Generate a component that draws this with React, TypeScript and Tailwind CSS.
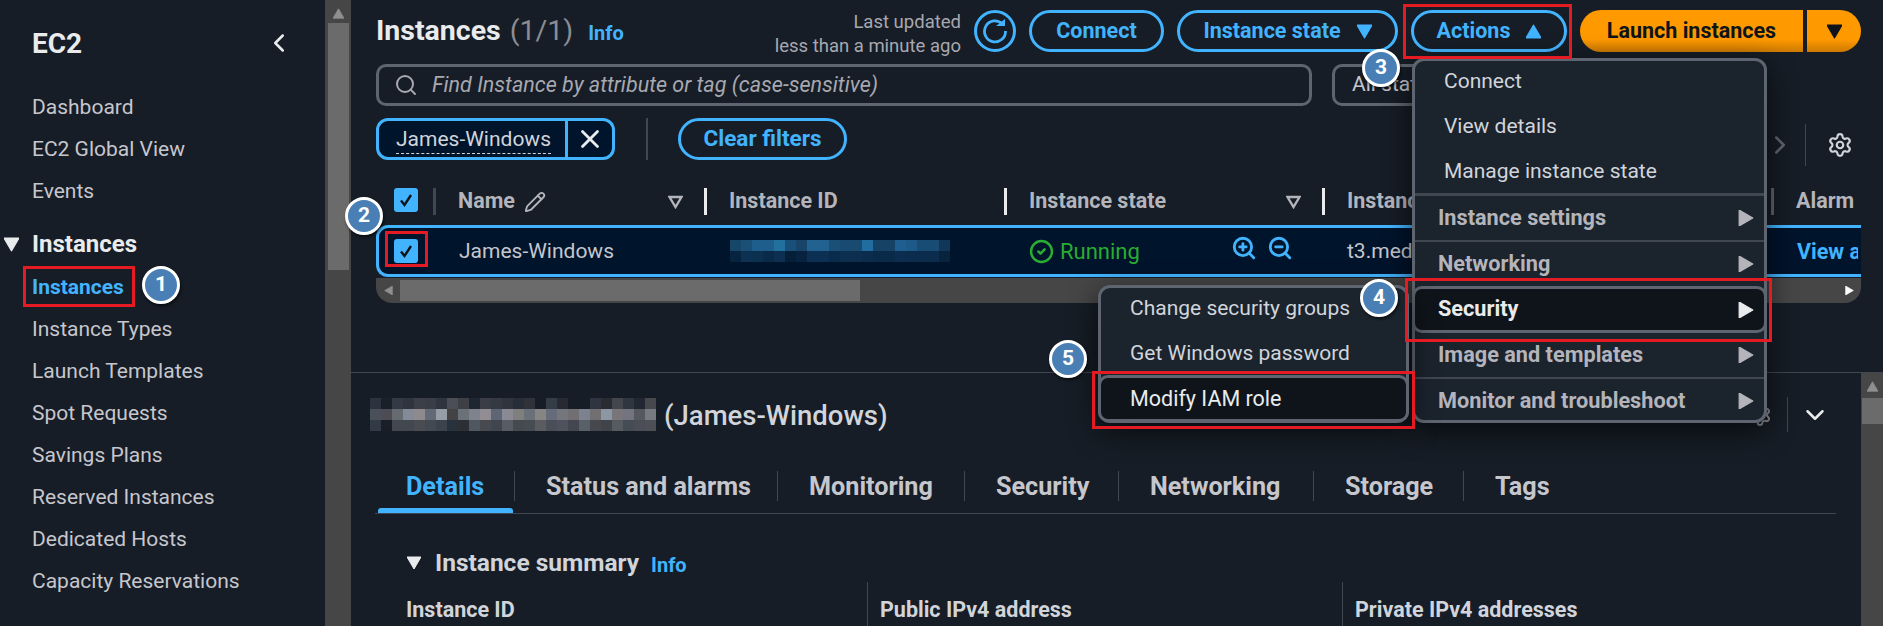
import { ChevronDown, ChevronLeft, ChevronRight, CircleCheck, Pencil, Search, Settings, X, ZoomIn, ZoomOut } from "lucide-react";

const FONT = "[font-family:Roboto,'Noto_Sans',sans-serif]";

const navTop = ["Dashboard", "EC2 Global View", "Events"];
const navBottom = ["Instance Types", "Launch Templates", "Spot Requests", "Savings Plans", "Reserved Instances", "Dedicated Hosts", "Capacity Reservations"];
const tabs = ["Details", "Status and alarms", "Monitoring", "Security", "Networking", "Storage", "Tags"];

const idMosaic = [
  ["#164668", "#1a4f76", "#1e5e8d", "#1f5e8b", "#22709e", "#19507a", "#174468", "#216291", "#216291", "#1a4f76", "#194b72", "#194a70", "#226da0", "#164266", "#164266", "#1f5e90", "#1e5a88", "#194c74", "#194c74", "#103658"],
  ["#06243f", "#0c3153", "#0c3050", "#0a2a49", "#0c2f52", "#051f38", "#07233f", "#0c3053", "#0c3053", "#0a2c4c", "#0c2f50", "#0c2f50", "#0b2c4c", "#0a2a4a", "#0a2a4a", "#0c2d4f", "#0b2c4c", "#0b2c4c", "#0b2c4c", "#07233e"],
];
const titleMosaic = [
  ["#2b343e", "#1a2029", "#333a45", "#2e353f", "#3c3f47", "#383d46", "#2e353f", "#4b4e57", "#3f4046", "#1e2731", "#3a3d46", "#343a44", "#30343c", "#272e38", "#2f3239", "#161d26", "#343c46", "#272a30", "#161d26", "#161d26", "#2f3540", "#2a2c32", "#44464e", "#303640", "#212833", "#46484e"],
  ["#4a505a", "#4d4c54", "#666b72", "#838b98", "#8e8a8e", "#626a78", "#979da6", "#434244", "#6b7178", "#7e838e", "#928d92", "#5e6676", "#8a8a94", "#7f7f7e", "#697078", "#858684", "#676c7a", "#74767d", "#726f73", "#7c8290", "#726f70", "#8b97a2", "#78767a", "#73747f", "#55585e", "#787a82"],
  ["#323a45", "#1a1e28", "#434750", "#434850", "#4a4c52", "#434952", "#3b434c", "#28323c", "#2c3034", "#515760", "#474b50", "#3f4650", "#585c64", "#454a50", "#474b52", "#5a5c60", "#4a4e58", "#4f525c", "#454750", "#586068", "#46484e", "#404349", "#585a62", "#454c56", "#4b4e56", "#4e5056"],
];

function Mosaic({ rows, cell }: { rows: string[][]; cell: number }) {
  return (
    <svg width={rows[0].length * cell} height={rows.length * cell} className="block shrink-0" shapeRendering="crispEdges">
      {rows.map((row, y) =>
        row.map((fill, x) => <rect key={`${x}-${y}`} x={x * cell} y={y * cell} width={cell} height={cell} fill={fill} />)
      )}
    </svg>
  );
}

function Tri({ dir, size = 14, color }: { dir: "down" | "up" | "right" | "left"; size?: number; color: string }) {
  const pts = { down: "0,1 14,1 7,13", up: "7,1 14,13 0,13", right: "1,0 13,7 1,14", left: "13,0 1,7 13,14" }[dir];
  return (
    <svg width={size} height={size} viewBox="0 0 14 14" className="shrink-0">
      <polygon points={pts} fill={color} stroke={color} strokeWidth="1" strokeLinejoin="round" />
    </svg>
  );
}

function SortTri() {
  return (
    <svg width="15" height="14" viewBox="0 0 15 14" className="shrink-0">
      <polygon points="1.5,2 13.5,2 7.5,12" fill="none" stroke="#b4b4bb" strokeWidth="2.4" />
    </svg>
  );
}

function Check() {
  return (
    <div className="flex h-[24px] w-[24px] shrink-0 items-center justify-center rounded-[3px] bg-[#42b4ff]">
      <svg width="16" height="16" viewBox="0 0 16 16">
        <path d="M3 8.5 L6.5 13 L13 3" fill="none" stroke="#0f141a" strokeWidth="2.4" />
      </svg>
    </div>
  );
}

function OutlineBtn({ children, className = "" }: { children: React.ReactNode; className?: string }) {
  return (
    <div className={`flex h-[42px] items-center justify-center rounded-[21px] border-[3px] border-[#42b4ff] text-[21.5px] font-bold text-[#42b4ff] ${className}`}>
      {children}
    </div>
  );
}

function HeadCell({ label, line, tri, pencil }: { label?: string; line: string; tri?: boolean; pencil?: boolean }) {
  return (
    <div className="flex h-[27px] items-center">
      <div className={`h-[27px] ${line} shrink-0`} />
      <span className="ml-[22px] whitespace-nowrap text-[21.5px] font-bold text-[#b4b4bb]">{label}</span>
      {pencil && <Pencil size={22} strokeWidth={2} className="ml-[9px] text-[#b4b4bb]" />}
      {tri && <div className="ml-auto mr-[21px]"><SortTri /></div>}
    </div>
  );
}

function Badge({ n, className }: { n: number; className: string }) {
  return (
    <div className={`absolute flex h-[38px] w-[38px] items-center justify-center rounded-full border-[3px] border-white bg-[#4a7fb5] text-[21px] font-bold text-white shadow-[1px_2px_3px_rgba(0,0,0,0.6)] ${className}`}>
      {n}
    </div>
  );
}

function MenuRow({ label, bold }: { label: string; bold?: boolean }) {
  return bold ? (
    <div className="flex h-[44px] items-center justify-between pl-[23px] pr-[10px] text-[21.7px] font-bold text-[#b4b4bb]">
      {label}
      <Tri dir="right" size={16} color="#b4b4bb" />
    </div>
  ) : (
    <div className="flex h-[45px] items-center pl-[29px] pt-[2px] text-[21px] text-[#d1d5db]">{label}</div>
  );
}

export default function App() {
  return (
    <div className={`relative flex h-[626px] w-[1883px] overflow-hidden bg-[#161d26] ${FONT}`}>
      {/* sidebar */}
      <aside className="w-[325px] shrink-0">
        <div className="flex h-[86px] items-center justify-between pl-[32px] pr-[31px]">
          <span className="mt-[1px] text-[28px] font-bold text-[#e9ebed]">EC2</span>
          <ChevronLeft size={30} strokeWidth={2} className="text-[#e9ebed]" />
        </div>
        {navTop.map((t) => (
          <div key={t} className="flex h-[42px] items-center pl-[32px] pt-[2px] text-[21px] text-[#c6c6cd]">{t}</div>
        ))}
        <div className="mt-[11px] flex h-[42px] items-center text-[24px] font-bold text-[#e9ebed]">
          <div className="ml-[4px] mr-[13px]"><Tri dir="down" size={15} color="#e9ebed" /></div>
          Instances
        </div>
        <div className="flex h-[43px] items-center pl-[32px] pt-[2px] text-[21px] font-bold text-[#42b4ff]">Instances</div>
        {navBottom.map((t) => (
          <div key={t} className="flex h-[42px] items-center pl-[32px] pt-[2px] text-[21px] text-[#c6c6cd]">{t}</div>
        ))}
      </aside>

      {/* page scrollbar */}
      <div className="flex w-[26px] shrink-0 flex-col items-center bg-[#464646]">
        <div className="mt-[8px] h-[8px]"><Tri dir="up" size={11} color="#8f8f8f" /></div>
        <div className="mt-[7px] h-[247px] w-[21px] bg-[#6b6b6b]" />
      </div>

      <main className="flex min-w-0 flex-1 flex-col">
        {/* instances list */}
        <section className="h-[373px] shrink-0 border-b border-[#414750] pl-[25px] pr-[22px] pt-[10px]">
          <div className="flex h-[42px] items-center">
            <span className="text-[28.5px] font-bold text-[#e9ebed]">Instances</span>
            <span className="ml-[9px] text-[28.5px] text-[#8c8c94]">(1/1)</span>
            <span className="ml-[15px] mt-[3px] text-[20px] font-bold text-[#42b4ff]">Info</span>
            <div className="ml-auto mr-[13px] pt-[6px] text-right text-[18.5px] leading-[24px] text-[#a8a8b0]">
              <div>Last updated</div>
              <div>less than a minute ago</div>
            </div>
            <div className="mr-[13px] flex h-[42px] w-[42px] items-center justify-center rounded-full border-[3px] border-[#42b4ff]">
              <svg width="26" height="26" viewBox="0 0 26 26">
                <path d="M20.5 6 A10.5 10.5 0 1 0 23.5 13" fill="none" stroke="#42b4ff" strokeWidth="2.8" />
                <path d="M14 8 H23 V1 Z" fill="#42b4ff" />
              </svg>
            </div>
            <OutlineBtn className="mr-[13px] w-[135px] pt-[1px]">Connect</OutlineBtn>
            <OutlineBtn className="mr-[13px] w-[221px] gap-[16px] pt-[1px]">Instance state <Tri dir="down" size={15} color="#42b4ff" /></OutlineBtn>
            <OutlineBtn className="mr-[13px] w-[156px] gap-[16px] pt-[1px]">Actions <Tri dir="up" size={15} color="#42b4ff" /></OutlineBtn>
            <div className="flex h-[42px] w-[281px] overflow-hidden rounded-[21px] text-[21.5px] font-bold text-[#0f141a]">
              <div className="flex w-[223px] items-center justify-center bg-gradient-to-b from-[#ff9900] from-70% to-[#cc7a00] pt-[1px]">Launch instances</div>
              <div className="ml-[4px] flex flex-1 items-center justify-center bg-gradient-to-b from-[#ff9900] from-70% to-[#cc7a00]">
                <Tri dir="down" size={15} color="#0f141a" />
              </div>
            </div>
          </div>

          <div className="mt-[12px] flex h-[42px] gap-[20px]">
            <div className="flex w-[936px] items-center rounded-[10px] border-[3px] border-[#5f6570] pl-[15px]">
              <Search size={24} strokeWidth={2} className="text-[#a8a8b0]" />
              <span className="ml-[14px] text-[21.5px] italic text-[#a8a8b0]">Find Instance by attribute or tag (case-sensitive)</span>
            </div>
            <div className="flex w-[170px] items-center rounded-[10px] border-[3px] border-[#5f6570] pl-[17px] text-[21px] text-[#c6c6cd]">All states</div>
          </div>

          <div className="mt-[12px] flex h-[42px] items-start">
            <div className="flex h-[42px] w-[239px] rounded-[12px] border-[3px] border-[#42b4ff] bg-[#00142b] text-[21px] text-[#d1d5db]">
              <div className="flex flex-1 items-center border-r-[3px] border-[#42b4ff] pl-[17px] pt-[2px]">
                <span className="border-b border-dashed border-[#d1d5db] leading-[27px]">James-Windows</span>
              </div>
              <div className="flex w-[44px] items-center justify-center">
                <X size={30} strokeWidth={2.2} className="text-[#e9ebed]" />
              </div>
            </div>
            <div className="ml-[31px] h-[42px] w-[2px] bg-[#414750]" />
            <OutlineBtn className="ml-[30px] w-[169px] text-[22.5px]">Clear filters</OutlineBtn>
            <div className="ml-auto mt-[6px] flex h-[42px] items-center">
              <ChevronRight size={30} strokeWidth={2} className="text-[#5f6570]" />
              <div className="ml-[10px] h-[42px] w-px bg-[#414750]" />
              <Settings size={26} strokeWidth={2} className="ml-[21px] mr-[8px] text-[#d1d5db]" />
            </div>
          </div>

          {/* table */}
          <div className="mt-[28px] grid h-[27px] grid-cols-[57px_271px_300px_318px_449px_90px]">
            <div className="flex items-start justify-center"><div className="ml-[3px]"><Check /></div></div>
            <HeadCell label="Name" line="w-[3px] bg-[#414750]" pencil tri />
            <HeadCell label="Instance ID" line="w-[3px] bg-[#e9ebed]" />
            <HeadCell label="Instance state" line="w-[3px] bg-[#e9ebed]" tri />
            <HeadCell label="Instance type" line="w-[3px] bg-[#e9ebed]" />
            <HeadCell label="Alarm" line="w-[3px] bg-[#5f6570]" />
          </div>
          <div className="mt-[10px] grid h-[52px] grid-cols-[54px_271px_300px_318px_449px_87px] overflow-hidden rounded-l-[12px] border-y-[3px] border-l-[3px] border-[#42b4ff] bg-[#00142b] text-[21px] text-[#c6c6cd]">
            <div className="flex items-center pl-[15px]"><Check /></div>
            <div className="flex items-center pl-[26px] pt-[2px]">James-Windows</div>
            <div className="flex items-center pl-[26px]"><Mosaic rows={idMosaic} cell={11} /></div>
            <div className="flex items-center pl-[25px]">
              <CircleCheck size={25} strokeWidth={2.4} className="text-[#29ad32]" />
              <span className="ml-[6px] text-[22px] text-[#29ad32]">Running</span>
              <ZoomIn size={26} strokeWidth={2.6} className="ml-[91px] mt-[-6px] text-[#42b4ff]" />
              <ZoomOut size={26} strokeWidth={2.6} className="ml-[10px] mt-[-6px] text-[#42b4ff]" />
            </div>
            <div className="flex items-center pl-[25px] pt-[2px]">t3.medium</div>
            <div className="flex items-center overflow-hidden whitespace-nowrap pl-[26px] pt-[2px] text-[21.5px] font-bold text-[#42b4ff]">View alarms</div>
          </div>
          <div className="mt-[1px] flex h-[25px] items-center rounded-b-[16px] bg-[#464646] pl-[8px] pr-[7px]">
            <Tri dir="left" size={9} color="#8f8f8f" />
            <div className="ml-[7px] h-[21px] w-[460px] bg-[#6b6b6b]" />
            <div className="ml-auto"><Tri dir="right" size={9} color="#ffffff" /></div>
          </div>
        </section>

        {/* details panel */}
        <div className="flex min-h-0 flex-1">
          <section className="min-w-0 flex-1">
            <div className="ml-[19px] mt-[24px] flex h-[35px] items-center">
              <Mosaic rows={titleMosaic} cell={11} />
              <span className="ml-[8px] pt-[2px] text-[27.5px] font-medium text-[#d1d5db]">(James-Windows)</span>
              <Settings size={24} strokeWidth={2} className="ml-auto text-[#8c8c94]" />
              <div className="ml-[15px] h-[35px] w-px bg-[#414750]" />
              <ChevronDown size={30} strokeWidth={2} className="ml-[12px] mr-[31px] text-[#e9ebed]" />
            </div>
            <div className="relative ml-[24px] mt-[39px] grid h-[43px] w-[1461px] grid-cols-[140px_263px_187px_154px_195px_150px_auto] items-start border-b border-[#414750]">
              {tabs.map((t, i) => (
                <div key={t} className={`flex h-[30px] items-center whitespace-nowrap pl-[31px] pt-[2px] text-[25.2px] font-bold ${i === 0 ? "text-[#42b4ff]" : "text-[#c6c6cd]"} ${i === tabs.length - 1 ? "" : "border-r border-[#414750]"}`}>
                  {t}
                </div>
              ))}
              <div className="absolute bottom-0 left-[3px] h-[5px] w-[135px] rounded-t-[3px] bg-[#42b4ff]" />
            </div>
            <div className="ml-[56px] mt-[34px] flex h-[30px] items-center">
              <Tri dir="down" size={14} color="#e9ebed" />
              <span className="ml-[14px] text-[24.5px] font-bold text-[#d1d5db]">Instance summary</span>
              <span className="ml-[12px] mt-[3px] text-[20px] font-bold text-[#42b4ff]">Info</span>
            </div>
            <div className="ml-[55px] mt-[4px] grid grid-cols-[461px_475px_1fr] text-[21.5px] font-bold leading-[24px] text-[#d1d5db]">
              <div className="h-[50px] pt-[16px]">Instance ID</div>
              <div className="h-[50px] border-l border-[#414750] pl-[12px] pt-[16px]">Public IPv4 address</div>
              <div className="h-[50px] border-l border-[#414750] pl-[12px] pt-[16px]">Private IPv4 addresses</div>
            </div>
          </section>
          <div className="flex w-[22px] shrink-0 flex-col items-center bg-[#464646]">
            <div className="mt-[8px]"><Tri dir="up" size={11} color="#8f8f8f" /></div>
            <div className="ml-[1px] mt-[6px] h-[26px] w-[21px] bg-[#6b6b6b]" />
          </div>
        </div>
      </main>

      {/* actions menu */}
      <div className="absolute left-[1412px] top-[58px] h-[365px] w-[355px] rounded-[12px] border-[3px] border-[#5f6570] bg-[#1b232d] shadow-[0_8px_28px_rgba(0,0,0,0.65)]">
        <div className="mt-[-3px]"><MenuRow label="Connect" /></div>
        <MenuRow label="View details" />
        <div className="border-b-[3px] border-[#414750]"><MenuRow label="Manage instance state" /></div>
        <div className="border-b-[2px] border-[#414750]"><MenuRow label="Instance settings" bold /></div>
        <MenuRow label="Networking" bold />
        <div className="mx-[-3px] flex h-[47px] items-center justify-between rounded-[10px] border-[3px] border-[#5f6570] bg-[#0f141a] pl-[23px] pr-[10px] text-[21.7px] font-bold text-[#e9ebed]">
          Security
          <Tri dir="right" size={16} color="#e9ebed" />
        </div>
        <div className="border-b-[2px] border-[#414750]"><MenuRow label="Image and templates" bold /></div>
        <MenuRow label="Monitor and troubleshoot" bold />
      </div>

      {/* security submenu */}
      <div className="absolute left-[1098px] top-[285px] h-[138px] w-[311px] rounded-[12px] border-[3px] border-[#5f6570] bg-[#1b232d] text-[#d1d5db] shadow-[0_8px_28px_rgba(0,0,0,0.65)]">
        <div className="mt-[-3px]"><MenuRow label="Change security groups" /></div>
        <MenuRow label="Get Windows password" />
        <div className="mx-[-3px] flex h-[47px] items-center rounded-[10px] border-[3px] border-[#5f6570] bg-[#0f141a] pl-[29px] pt-[1px] text-[21.5px] text-[#e9ebed]">Modify IAM role</div>
      </div>

      {/* annotation boxes */}
      <div className="absolute left-[23px] top-[266px] h-[41px] w-[112px] border-[3px] border-[#e41b23]" />
      <div className="absolute left-[385px] top-[231px] h-[36px] w-[43px] border-[3px] border-[#e41b23]" />
      <div className="absolute left-[1403px] top-[4px] h-[55px] w-[169px] border-[3px] border-[#e41b23]" />
      <div className="absolute left-[1405px] top-[278px] h-[64px] w-[367px] border-[3px] border-[#e41b23]" />
      <div className="absolute left-[1092px] top-[371px] h-[58px] w-[323px] border-[3px] border-[#e41b23]" />

      <Badge n={1} className="left-[142px] top-[266px]" />
      <Badge n={2} className="left-[345px] top-[197px]" />
      <Badge n={3} className="left-[1362px] top-[49px]" />
      <Badge n={4} className="left-[1360px] top-[279px]" />
      <Badge n={5} className="left-[1049px] top-[340px]" />
    </div>
  );
}
